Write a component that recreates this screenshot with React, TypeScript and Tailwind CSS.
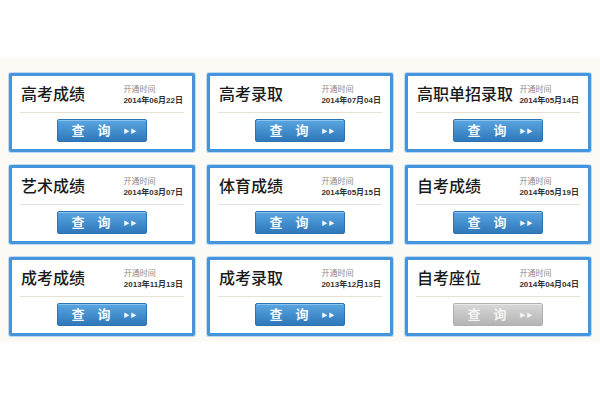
const items = [
  { name: '高考成绩', date: '2014年06月22日', on: true },
  { name: '高考录取', date: '2014年07月04日', on: true },
  { name: '高职单招录取', date: '2014年05月14日', on: true },
  { name: '艺术成绩', date: '2014年03月07日', on: true },
  { name: '体育成绩', date: '2014年05月15日', on: true },
  { name: '自考成绩', date: '2014年05月19日', on: true },
  { name: '成考成绩', date: '2013年11月13日', on: true },
  { name: '成考录取', date: '2013年12月13日', on: true },
  { name: '自考座位', date: '2014年04月04日', on: false },
];

function Card({ name, date, on }: { name: string; date: string; on: boolean }) {
  return (
    <div className="h-[79px] border-[3px] border-[#4695dc] rounded-[2px] bg-white shadow-[0_0_0_1px_#bcdaf3] px-[8px] flex flex-col">
      {/* header row */}
      <div className="h-[37px] flex items-center justify-between border-b border-[#e6e2d3] pl-[1px] pt-[2px]">
        <span className="text-[16px] leading-none font-medium text-[#1a1a1a]">{name}</span>
        <div className="flex flex-col items-start pr-[1px]">
          <span className="text-[8px] leading-[10px] text-[#8a8a8a]">开通时间</span>
          <span className="text-[8px] leading-[11px] font-bold text-[#333]">{date}</span>
        </div>
      </div>
      <div className="flex justify-center mt-[6px]">
        <button
          type="button"
          className={
            on
              ? 'w-[90px] h-[23px] rounded-[2px] border border-[#2d72b4] bg-gradient-to-b from-[#5aa6e0] to-[#2e78bb] text-[#f4f8fc] text-[13px] font-bold flex items-center justify-center gap-[13px] pl-[4px] shadow-[inset_0_1px_0_#8cc3ec]'
              : 'w-[90px] h-[23px] rounded-[2px] border border-[#b0b0b0] bg-gradient-to-b from-[#d8d8d8] to-[#b4b4b4] text-[#f4f4f4] text-[13px] font-bold flex items-center justify-center gap-[13px] pl-[4px] shadow-[inset_0_1px_0_#e8e8e8]'
          }
        >
          <span>查</span>
          <span>询</span>
          <span className="flex gap-[1px] text-[6px] leading-none">
            <span>▶</span>
            <span>▶</span>
          </span>
        </button>
      </div>
    </div>
  );
}

export default function App() {
  return (
    <div
      className="w-[600px] h-[400px] bg-white pt-[58px]"
      style={{ fontFamily: '"Liberation Sans", "Noto Sans CJK SC", sans-serif' }}
    >
      <div className="bg-[#fbfaf4] pt-[15px] pb-[6px] px-[9px] grid grid-cols-3 gap-x-[12px] gap-y-[13px]">
        {items.map((it) => (
          <Card key={it.name} {...it} />
        ))}
      </div>
    </div>
  );
}
